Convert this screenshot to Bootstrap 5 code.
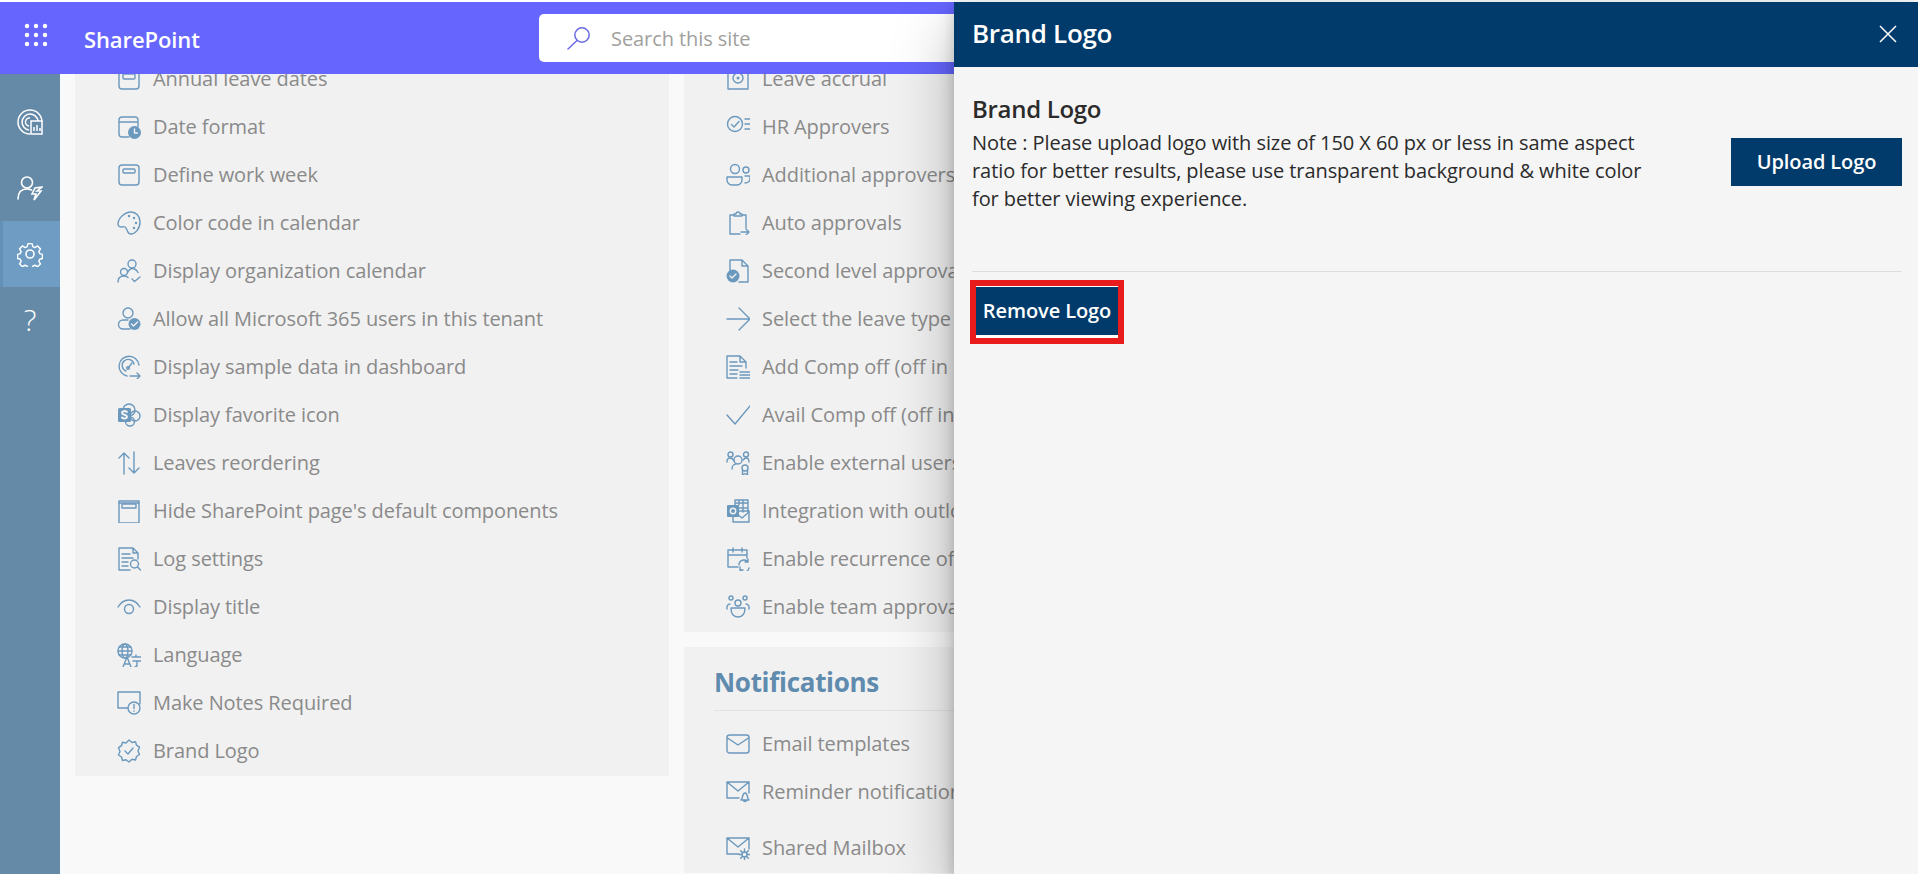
<!DOCTYPE html>
<html lang="en">
<head>
  <meta charset="UTF-8">
  <meta name="viewport" content="width=device-width, initial-scale=1.0">
  <title>Brand Logo - SharePoint</title>
  <link href="https://cdn.jsdelivr.net/npm/bootstrap@5.3.0/dist/css/bootstrap.min.css" rel="stylesheet">
  <style>
    body {
      font-family: "Open Sans", "Noto Sans", "Liberation Sans", sans-serif;
      font-size: 20px;
      background: #fff;
      padding-top: 2px;
      height: 874px;
      overflow: hidden;
    }
    .app-shell { height: 872px; }
    .top-bar { height: 72px; background: #6666ff; flex: none; }
    .waffle { width: 71px; padding-bottom: 6px; }
    .brand-name { width: 468px; font-size: 22px; font-weight: 600; color: #fff; padding: 2px 0 0 13px; letter-spacing: -.1px; }
    .search-box {
      width: 600px; height: 48px; background: #fff; border-radius: 5px;
      color: #a19f9d; padding-left: 28px; gap: 20px; letter-spacing: -.08px;
    }
    .search-box span { padding-top: 2px; }
    .side-rail { width: 60px; background: #658aa8; padding-top: 15px; flex: none; }
    .rail-item { height: 66px; color: #fff; }
    .rail-item.is-active { background: #6f9cc2; border-left: 3px solid #6590b5; padding-right: 3px; }
    .rail-help { font-size: 30px; font-weight: 300; line-height: 1; }
    .main-area { background: #f9f9f9; padding-left: 15px; gap: 15px; overflow: hidden; min-width: 0; }
    .col-pane { width: 594px; flex: none; margin-top: -19px; }
    .pane-box { background: #f1f1f1; }
    .pane-box + .pane-box { margin-top: 15px; }
    .pane-left { padding: 0 0 1px 42px; }
    .pane-right { padding: 0 0 1px 42px; }
    .set-row { height: 48px; gap: 12px; color: #8a8a8a; white-space: nowrap; letter-spacing: -.08px; }
    .set-row svg { flex: none; }
    .set-row.row-gap { margin-top: 8px; }
    .ico { fill: none; stroke: #6b98bd; stroke-width: 1.4; stroke-linecap: round; stroke-linejoin: round; }
    .ico .solid { fill: #6b98bd; stroke: none; }
    .ico .knock { stroke: #f1f1f1; }
    .notif-title { color: #5f8bae; font-size: 26px; font-weight: 700; line-height: 36px; padding-top: 17px; padding-bottom: 10px; margin: 0 0 9px -12px; border-bottom: 1px solid #e3e3e3; letter-spacing: -.3px; }
    .slide-panel {
      width: 964px; top: 0; bottom: 0; right: 0; background: #f5f5f5; z-index: 10;
      box-shadow: 0 26px 58px rgba(0,0,0,.28), 0 5px 14px rgba(0,0,0,.2);
    }
    .slide-head { height: 65px; background: #003b6b; color: #fff; padding: 0 21px 2px 18px; flex: none; }
    .slide-head h1 { font-size: 26px; font-weight: 600; margin: 0; letter-spacing: -.3px; }
    .slide-body { padding: 0 16px 0 18px; color: #2b2b2b; }
    .logo-block { height: 205px; padding-top: 23px; border-bottom: 1px solid #ddd; }
    .logo-block h2 { font-size: 24px; font-weight: 600; margin: 0 0 1px; line-height: 38px; letter-spacing: -.3px; }
    .logo-note { width: 680px; line-height: 28px; margin: 0; letter-spacing: -.08px; }
    .dark-btn { background: #003b6b; color: #fff; font-size: 20px; font-weight: 600; border: 0; border-radius: 0; letter-spacing: -.1px; }
    .dark-btn:hover { background: #003b6b; color: #fff; }
    .upload-btn { width: 171px; height: 48px; margin-top: 48px; padding: 0; }
    .remove-wrap { margin: 8px 0 0 -2px; width: 154px; height: 64px; border: 6px solid #e81c1c; background: #fff; }
    .remove-btn { display: block; width: 142px; height: 48px; margin-top: 1px; padding: 0; }
  </style>
</head>
<body>

  <div class="app-shell d-flex flex-column position-relative">

    <!-- Top bar -->
    <header class="top-bar d-flex align-items-center">
      <div class="waffle d-flex justify-content-center">
        <svg width="24" height="24" viewBox="0 0 24 24" fill="#fff"><circle cx="3" cy="3" r="2.2"/><circle cx="12" cy="3" r="2.2"/><circle cx="21" cy="3" r="2.2"/><circle cx="3" cy="12" r="2.2"/><circle cx="12" cy="12" r="2.2"/><circle cx="21" cy="12" r="2.2"/><circle cx="3" cy="21" r="2.2"/><circle cx="12" cy="21" r="2.2"/><circle cx="21" cy="21" r="2.2"/></svg>
      </div>
      <div class="brand-name">SharePoint</div>
      <div class="search-box d-flex align-items-center">
        <svg width="24" height="24" viewBox="0 0 24 24" fill="none" stroke="#6a6ae6" stroke-width="1.5" stroke-linecap="round"><circle cx="15" cy="9" r="7.2"/><path d="M10 14.5 1 23"/></svg>
        <span>Search this site</span>
      </div>
    </header>

    <div class="d-flex flex-grow-1" style="min-height:0">
      <!-- Left rail -->
      <nav class="side-rail">
        <div class="rail-item d-flex align-items-center justify-content-center">
          <svg width="26" height="26" viewBox="0 0 26 26" fill="none" stroke="#fff" stroke-width="1.5"><path d="M13 25A12 12 0 1 1 25 13"/><path d="M12 21A8 8 0 1 1 21 12"/><path d="M12 17A4 4 0 0 1 13 9"/><path d="M14 12h11v13H14z" fill="#658aa8"/><path d="M17 22v-4M20 22v-6M23 22v-3"/></svg>
        </div>
        <div class="rail-item d-flex align-items-center justify-content-center">
          <svg width="26" height="26" viewBox="0 0 26 26" fill="none" stroke="#fff" stroke-width="1.6" stroke-linecap="round"><circle cx="10" cy="7.5" r="5.5"/><path d="M1 24c0-7 3-10 9-10 2 0 3 .4 4.500 1"/><path d="M25 12l-7 1-3 6h4l-2 6 7-9h-4z"/></svg>
        </div>
        <div class="rail-item is-active d-flex align-items-center justify-content-center">
          <svg width="26" height="26" viewBox="0 0 26 26" fill="none" stroke="#fff" stroke-width="1.6" stroke-linejoin="round"><path d="M10.700 1.500h4.600l.8 3.400 2.300 1 3-1.800 3.200 3.200-1.800 3 1 2.300 3 .8v4.600l-3 .8-1 2.300 1.800 3-3.200 3-3-1.600-2.300 1-.8 2.500h-4.600l-.8-2.500-2.300-1-3 1.600-3.200-3 1.800-3-1-2.300-3-.8v-4.600l3-.8 1-2.300-1.800-3 3.200-3.200 3 1.800 2.300-1z" transform="translate(1.300 1.300) scale(.9)"/><circle cx="13" cy="13" r="4"/></svg>
        </div>
        <div class="rail-item d-flex align-items-center justify-content-center"><span class="rail-help">?</span></div>
      </nav>

      <!-- Settings lists -->
      <main class="main-area d-flex flex-grow-1 align-items-start">
        <div class="col-pane">
          <section class="pane-box pane-left">
            <div class="set-row d-flex align-items-center"><svg class="ico" width="24" height="24" viewBox="0 0 24 24"><rect x="2" y="2" width="20" height="20" rx="3"/><rect x="6" y="7" width="12" height="5" rx="1"/></svg>Annual leave dates</div>
            <div class="set-row d-flex align-items-center"><svg class="ico" width="24" height="24" viewBox="0 0 24 24"><path d="M12 22H5a3 3 0 0 1-3-3V5a3 3 0 0 1 3-3h13a3 3 0 0 1 3 3v7M2 7h19"/><circle class="solid" cx="17.500" cy="17.500" r="6.500"/><path class="knock" d="M17.500 14v4h3"/></svg>Date format</div>
            <div class="set-row d-flex align-items-center"><svg class="ico" width="24" height="24" viewBox="0 0 24 24"><rect x="2" y="2" width="20" height="20" rx="3"/><rect x="6" y="6" width="12" height="4" rx="1"/></svg>Define work week</div>
            <div class="set-row d-flex align-items-center"><svg class="ico" width="24" height="24" viewBox="0 0 24 24"><path d="M14 1c5 0 9 4 9 10 0 7-5 12-9 12-3 0-3-2-4-4-1-3-3-4-5-3-2 0-4-1-4-3 0-6 7-12 13-12z"/><circle class="solid" cx="12" cy="5" r="1.200"/><circle class="solid" cx="17" cy="7" r="1.200"/><circle class="solid" cx="19" cy="12" r="1.200"/><circle class="solid" cx="17" cy="17" r="1.200"/></svg>Color code in calendar</div>
            <div class="set-row d-flex align-items-center"><svg class="ico" width="24" height="24" viewBox="0 0 24 24"><circle cx="15" cy="5" r="4"/><circle cx="7" cy="13" r="3.500"/><path d="M1 23c0-4 2-6 6-6 2 0 3 .5 4 1.500M11 13c1-2 2-3.500 4-3.500 3 0 5 2 6 4M15 20l2.500 2.500L23 18"/></svg>Display organization calendar</div>
            <div class="set-row d-flex align-items-center"><svg class="ico" width="24" height="24" viewBox="0 0 24 24"><circle cx="11" cy="6" r="5"/><path d="M13 22H6a4.500 4.500 0 0 1 0-9h5"/><circle class="solid" cx="17.500" cy="17" r="6"/><path class="knock" d="M14.500 17l2 2 4-4"/></svg>Allow all Microsoft 365 users in this tenant</div>
            <div class="set-row d-flex align-items-center"><svg class="ico" width="24" height="24" viewBox="0 0 24 24"><path d="M10 21A10 10 0 1 1 22 10"/><path d="M9 16A6 6 0 1 1 17 9"/><path d="M11 13l4-5"/><circle cx="11" cy="13" r="1.300"/><path d="M13 21h10M20 18l3 3-3 3"/></svg>Display sample data in dashboard</div>
            <div class="set-row d-flex align-items-center"><svg class="ico" width="24" height="24" viewBox="0 0 24 24"><circle cx="12" cy="7" r="6"/><circle cx="18" cy="13" r="5"/><circle cx="13" cy="18.500" r="4.500"/><rect class="solid" x="1" y="5" width="13" height="14" rx="1.500"/><path class="knock" stroke-width="2" d="M10 9c-2-1.500-5-1-5 .8 0 2.400 5 1.500 5 4 0 1.800-3 2.200-5 .8"/></svg>Display favorite icon</div>
            <div class="set-row d-flex align-items-center"><svg class="ico" width="24" height="24" viewBox="0 0 24 24"><path d="M7 23V2M2 7l5-5 5 5M17 1v21M12 17l5 5 5-5"/></svg>Leaves reordering</div>
            <div class="set-row d-flex align-items-center"><svg class="ico" width="24" height="24" viewBox="0 0 24 24"><rect x="2" y="2" width="20" height="22"/><path d="M2 4h20"/><rect x="5" y="5" width="14" height="4"/></svg>Hide SharePoint page's default components</div>
            <div class="set-row d-flex align-items-center"><svg class="ico" width="24" height="24" viewBox="0 0 24 24"><path d="M13 23H2V1h14l5 5v6M16 1v5h5M5 7h8M5 11h11M5 15h6M5 19h6"/><circle cx="17.500" cy="17" r="4"/><path d="M20.500 20l3 3"/></svg>Log settings</div>
            <div class="set-row d-flex align-items-center"><svg class="ico" width="24" height="24" viewBox="0 0 24 24"><path d="M1 12C4 7 8 5 12 5s8 2 11 7"/><circle cx="12" cy="14" r="4.500"/></svg>Display title</div>
            <div class="set-row d-flex align-items-center"><svg class="ico" width="24" height="24" viewBox="0 0 24 24"><circle cx="8" cy="8" r="7"/><ellipse cx="8" cy="8" rx="3" ry="7"/><path d="M1 8h14M2 4h12M2 12h12"/><path d="M6 24l4-10 4 10M7.500 21h5M15 14h9M19 12v2M16 18h8M20 18v5l-2 1" fill="#f1f1f1"/></svg>Language</div>
            <div class="set-row d-flex align-items-center"><svg class="ico" width="24" height="24" viewBox="0 0 24 24"><path d="M11 17H1V1h22v12"/><circle cx="17" cy="17" r="6"/><path d="M17 13.500v4M17 20v.3"/></svg>Make Notes Required</div>
            <div class="set-row d-flex align-items-center"><svg class="ico" width="24" height="24" viewBox="0 0 24 24"><path d="M12 1l3 2.500 3.500-.8 1 3.500 3 2-1.500 3.800 1.500 3.500-3 2-1 3.500-3.500-.7L12 23l-3-2.200-3.500.7-1-3.500-3-2 1.500-3.500L1.500 8.700l3-2 1-3.500 3.500.8z"/><path d="M8 12l3 3 5-6"/></svg>Brand Logo</div>
          </section>
        </div>

        <div class="col-pane">
          <section class="pane-box pane-right">
            <div class="set-row d-flex align-items-center"><svg class="ico" width="24" height="24" viewBox="0 0 24 24"><rect x="2" y="2" width="20" height="20"/><circle cx="12" cy="11" r="5"/><circle class="solid" cx="12" cy="11" r="1.500"/></svg>Leave accrual</div>
            <div class="set-row d-flex align-items-center"><svg class="ico" width="24" height="24" viewBox="0 0 24 24"><circle cx="9" cy="9" r="7.500"/><path d="M5.500 9.500l2.500 2.500 5-5.500M19 4h5M19 9h5M19 14h5"/></svg>HR Approvers</div>
            <div class="set-row d-flex align-items-center"><svg class="ico" width="24" height="24" viewBox="0 0 24 24"><circle cx="9" cy="6" r="4.500"/><circle cx="20" cy="7" r="3"/><path d="M1 14h15v3a5 5 0 0 1-5 5H6a5 5 0 0 1-5-5zM19 13h5v2c0 3-2 5-5 5"/></svg>Additional approvers</div>
            <div class="set-row d-flex align-items-center"><svg class="ico" width="24" height="24" viewBox="0 0 24 24"><path d="M8 4H4v19h10M16 4h4v13M8 5V3h2a2 2 0 0 1 4 0h2v2zM15 21h8M20 18l3 3-3 3"/></svg>Auto approvals</div>
            <div class="set-row d-flex align-items-center"><svg class="ico" width="24" height="24" viewBox="0 0 24 24"><path d="M4 13V1h12l6 6v16h-9M16 1v6h6"/><circle class="solid" cx="7" cy="17" r="6.500"/><path class="knock" d="M4 17l2 2 4-4"/></svg>Second level approvals</div>
            <div class="set-row d-flex align-items-center"><svg class="ico" width="24" height="24" viewBox="0 0 24 24"><path d="M1 12h22M13 1l11 11-11 11"/></svg>Select the leave type</div>
            <div class="set-row d-flex align-items-center"><svg class="ico" width="24" height="24" viewBox="0 0 24 24"><path d="M11 23H1V1h13l6 6v6M14 1v6h6M4 7h7M4 11h12M4 15h8M4 19h7M14 17h10M14 20h10M14 23h10"/></svg>Add Comp off (off in lieu)</div>
            <div class="set-row d-flex align-items-center"><svg class="ico" width="24" height="24" viewBox="0 0 24 24"><path d="M1 12l8 9L24 3"/></svg>Avail Comp off (off in lieu)</div>
            <div class="set-row d-flex align-items-center"><svg class="ico" width="24" height="24" viewBox="0 0 24 24"><circle cx="4.500" cy="3.500" r="2.500"/><circle cx="20" cy="3.500" r="2.500"/><circle cx="12" cy="9" r="4"/><path d="M1 11c0-3 1-4 3-4s3 1 4 3M17 9c1-1 2-2 3-2 2 0 3 1 3 4M6 18c0-3 2-5 4-5"/><circle cx="19" cy="17" r="3"/><path d="M16.500 19v5l2.500-1.500 2.500 1.500v-5"/></svg>Enable external users</div>
            <div class="set-row d-flex align-items-center"><svg class="ico" width="24" height="24" viewBox="0 0 24 24"><rect class="solid" x="1" y="6" width="12" height="12" rx="1"/><circle class="knock" cx="7" cy="12" r="2.700" stroke-width="1.500"/><path d="M9 6V1h13v12M13 1v5M17 1v12M9 4h13M13 9h9"/><path d="M7 18v5h16V12H12"/><path d="M11 15l5 4 7-6"/></svg>Integration with outlook</div>
            <div class="set-row d-flex align-items-center"><svg class="ico" width="24" height="24" viewBox="0 0 24 24"><path d="M12 20H2V3h19v8M2 8h19M7 1v4M16 1v4"/><path d="M13 18a5 5 0 0 1 9-3M23 21a5 5 0 0 1-9 2M22 12v3h-3M14 20v3h3"/></svg>Enable recurrence of leaves</div>
            <div class="set-row d-flex align-items-center"><svg class="ico" width="24" height="24" viewBox="0 0 24 24"><circle cx="12" cy="8" r="3"/><circle cx="5" cy="3" r="2"/><circle cx="19" cy="3" r="2"/><path d="M5 13h14c0 6-3 9-7 9s-7-3-7-9zM1 14c-.5-3 1-5 3-5M23 14c.5-3-1-5-3-5"/></svg>Enable team approval</div>
          </section>
          <section class="pane-box pane-right">
            <h2 class="notif-title">Notifications</h2>
            <div class="set-row d-flex align-items-center"><svg class="ico" width="24" height="24" viewBox="0 0 24 24"><rect x="1" y="3" width="22" height="18" rx="2.500"/><path d="M1.500 6L12 13l10.500-7"/></svg>Email templates</div>
            <div class="set-row d-flex align-items-center"><svg class="ico" width="24" height="24" viewBox="0 0 24 24"><path d="M13 18H1V2h22v11M1 2l11 9 11-9"/><path d="M15 20c2-1 1-7 4-7s2 6 4 7zM17.500 20a1.500 1.500 0 0 0 3 0"/></svg>Reminder notification</div>
            <div class="set-row row-gap d-flex align-items-center"><svg class="ico" width="24" height="24" viewBox="0 0 24 24"><path d="M13 18H1V2h22v11M1 2l11 9 11-9"/><circle cx="18.500" cy="18.500" r="2.500"/><path d="M18.500 13v2.500M18.500 21.500V24M13 18.500h2.500M21.500 18.500H24M14.700 14.700l1.700 1.700M20.600 20.600l1.700 1.700M14.700 22.300l1.700-1.700M20.600 16.400l1.700-1.700"/></svg>Shared Mailbox</div>
          </section>
        </div>
      </main>
    </div>

    <!-- Brand logo side panel -->
    <aside class="slide-panel position-absolute d-flex flex-column">
      <div class="slide-head d-flex align-items-center justify-content-between">
        <h1>Brand Logo</h1>
        <svg width="18" height="18" viewBox="0 0 18 18" stroke="#fff" stroke-width="1.500"><path d="M1 1l16 16M17 1 1 17"/></svg>
      </div>
      <div class="slide-body">
        <div class="logo-block d-flex justify-content-between align-items-start">
          <div>
            <h2>Brand Logo</h2>
            <p class="logo-note">Note : Please upload logo with size of 150 X 60 px or less in same aspect ratio for better results, please use transparent background &amp; white color for better viewing experience.</p>
          </div>
          <button type="button" class="btn dark-btn upload-btn">Upload Logo</button>
        </div>
        <div class="remove-wrap">
          <button type="button" class="btn dark-btn remove-btn">Remove Logo</button>
        </div>
      </div>
    </aside>
  </div>

  <script src="https://cdn.jsdelivr.net/npm/bootstrap@5.3.0/dist/js/bootstrap.bundle.min.js"></script>
</body>
</html>
